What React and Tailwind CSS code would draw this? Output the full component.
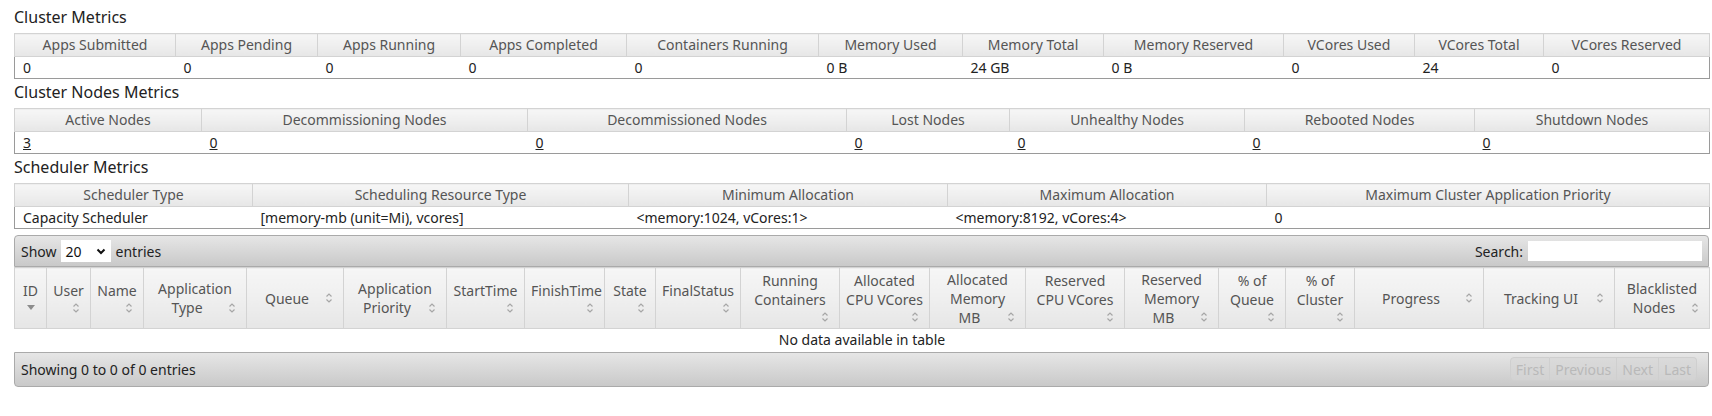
import React from 'react';

const clusterCols = [
  { label: 'Apps Submitted', value: '0', w: 'w-[161px]' },
  { label: 'Apps Pending', value: '0', w: 'w-[142px]' },
  { label: 'Apps Running', value: '0', w: 'w-[143px]' },
  { label: 'Apps Completed', value: '0', w: 'w-[166px]' },
  { label: 'Containers Running', value: '0', w: 'w-[192px]' },
  { label: 'Memory Used', value: '0 B', w: 'w-[144px]' },
  { label: 'Memory Total', value: '24 GB', w: 'w-[141px]' },
  { label: 'Memory Reserved', value: '0 B', w: 'w-[180px]' },
  { label: 'VCores Used', value: '0', w: 'w-[131px]' },
  { label: 'VCores Total', value: '24', w: 'w-[129px]' },
  { label: 'VCores Reserved', value: '0', w: 'w-[166px]' },
];

const nodeCols = [
  { label: 'Active Nodes', value: '3', w: 'w-[187px]' },
  { label: 'Decommissioning Nodes', value: '0', w: 'w-[326px]' },
  { label: 'Decommissioned Nodes', value: '0', w: 'w-[319px]' },
  { label: 'Lost Nodes', value: '0', w: 'w-[163px]' },
  { label: 'Unhealthy Nodes', value: '0', w: 'w-[235px]' },
  { label: 'Rebooted Nodes', value: '0', w: 'w-[230px]' },
  { label: 'Shutdown Nodes', value: '0', w: 'w-[235px]' },
];

const schedulerCols = [
  { label: 'Scheduler Type', value: 'Capacity Scheduler', w: 'w-[238px]' },
  { label: 'Scheduling Resource Type', value: '[memory-mb (unit=Mi), vcores]', w: 'w-[376px]' },
  { label: 'Minimum Allocation', value: '<memory:1024, vCores:1>', w: 'w-[319px]' },
  { label: 'Maximum Allocation', value: '<memory:8192, vCores:4>', w: 'w-[319px]' },
  { label: 'Maximum Cluster Application Priority', value: '0', w: 'w-[443px]' },
];

// icon: 'inline' sits beside the last line, 'below' drops to its own line
const appCols = [
  { lines: ['ID'], icon: 'below', sorted: true, w: 'w-[32px]' },
  { lines: ['User'], icon: 'below', w: 'w-[44px]' },
  { lines: ['Name'], icon: 'below', w: 'w-[53px]' },
  { lines: ['Application', 'Type'], icon: 'inline', w: 'w-[103px]' },
  { lines: ['Queue'], icon: 'inline', w: 'w-[97px]' },
  { lines: ['Application', 'Priority'], icon: 'inline', w: 'w-[103px]' },
  { lines: ['StartTime'], icon: 'below', w: 'w-[78px]' },
  { lines: ['FinishTime'], icon: 'below', w: 'w-[80px]' },
  { lines: ['State'], icon: 'below', w: 'w-[51px]' },
  { lines: ['FinalStatus'], icon: 'below', w: 'w-[85px]' },
  { lines: ['Running', 'Containers'], icon: 'below', w: 'w-[99px]' },
  { lines: ['Allocated', 'CPU VCores'], icon: 'below', w: 'w-[90px]' },
  { lines: ['Allocated', 'Memory', 'MB'], icon: 'inline', w: 'w-[96px]' },
  { lines: ['Reserved', 'CPU VCores'], icon: 'below', w: 'w-[99px]' },
  { lines: ['Reserved', 'Memory', 'MB'], icon: 'inline', w: 'w-[94px]' },
  { lines: ['% of', 'Queue'], icon: 'below', w: 'w-[67px]' },
  { lines: ['% of', 'Cluster'], icon: 'below', w: 'w-[69px]' },
  { lines: ['Progress'], icon: 'inline', w: 'w-[129px]' },
  { lines: ['Tracking UI'], icon: 'inline', w: 'w-[131px]' },
  { lines: ['Blacklisted', 'Nodes'], icon: 'inline', w: 'w-[95px]' },
];

const glass = 'bg-linear-to-b from-[#f6f6f6] via-[#efefef] to-[#e6e6e6]';
const toolbar = 'bg-linear-to-b from-[#e6e6e6] to-[#c9c9c9] border border-[#aaaaaa]';

const SortIcon = ({ sorted }) => (
  <span className="flex w-[16px] h-[16px] items-center justify-center shrink-0">
    {sorted ? (
      <svg width="8" height="5" viewBox="0 0 8 5">
        <path d="M0 0 H8 L4 5 Z" fill="#8c8c8c" />
      </svg>
    ) : (
      <svg width="8" height="12" viewBox="0 0 8 12" fill="none">
        <path d="M1.5 4.5 L4 2 L6.5 4.5" stroke="#a6a6a6" strokeWidth="1.2" />
        <path d="M1.5 7.5 L4 10 L6.5 7.5" stroke="#a6a6a6" strokeWidth="1.2" />
      </svg>
    )}
  </span>
);

const Heading = ({ children }) => (
  <h3 className="text-[16px] leading-[22px] pt-[2px] pb-[5px] text-[#222] font-normal">{children}</h3>
);

const MetricTable = ({ cols, link }) => (
  <table className="w-full table-fixed border-collapse">
    <thead>
      <tr>
        {cols.map((c) => (
          <th
            key={c.label}
            className={`${c.w} ${glass} h-[23px] p-0 border border-[#d3d3d3] font-normal text-[#555] text-[14px] leading-[18px] text-center whitespace-nowrap`}
          >
            {c.label}
          </th>
        ))}
      </tr>
    </thead>
    <tbody>
      <tr>
        {cols.map((c) => (
          <td
            key={c.label}
            className="h-[22px] p-0 pl-[8px] text-[14px] leading-[18px] text-[#222] border-b border-[#9a9a9a] first:border-l last:border-r whitespace-nowrap"
          >
            {link ? <span className="underline">{c.value}</span> : c.value}
          </td>
        ))}
      </tr>
    </tbody>
  </table>
);

const AppHeader = ({ col }) => {
  const last = col.lines.length - 1;
  return (
    <th className={`${col.w} ${glass} p-0 px-[6px] border border-[#d3d3d3] font-normal text-[#555] text-[14px] leading-[19px] align-middle`}>
      <div className="flex flex-col">
        {col.lines.map((line, i) =>
          i === last && col.icon === 'inline' ? (
            <div key={line} className="flex items-center">
              <span className="flex-1 text-center whitespace-nowrap">{line}</span>
              <SortIcon />
            </div>
          ) : (
            <div key={line} className="text-center whitespace-nowrap">{line}</div>
          )
        )}
        {col.icon === 'below' && (
          <div className={`flex ${col.sorted ? 'justify-center' : 'justify-end'}`}>
            <SortIcon sorted={col.sorted} />
          </div>
        )}
      </div>
    </th>
  );
};

const PageButton = ({ children, first, last }) => (
  <span
    className={`px-[5px] h-[24px] flex items-center text-[#b9b9b9] bg-[#d6d6d6]/60 border-[#cfcfcf] ${first ? 'border rounded-l-[4px]' : 'border-y border-r'} ${last ? 'rounded-r-[4px]' : ''}`}
  >
    {children}
  </span>
);

export default function App() {
  return (
    <div className="w-[1712px] h-[416px] bg-white pl-[14px] pr-[3px] pt-[4px] font-['Noto_Sans',sans-serif] text-[#222] text-[14px] overflow-hidden">
      <Heading>Cluster Metrics</Heading>
      <MetricTable cols={clusterCols} />

      <Heading>Cluster Nodes Metrics</Heading>
      <MetricTable cols={nodeCols} link />

      <Heading>Scheduler Metrics</Heading>
      <MetricTable cols={schedulerCols} />

      <div className="mt-[6px]">
        {/* top toolbar */}
        <div className={`${toolbar} rounded-t-[4px] h-[32px] flex items-center justify-between px-[6px]`}>
          <div className="flex items-center gap-[4px]">
            <span>Show</span>
            <span className="bg-white h-[22px] w-[50px] flex items-center justify-between px-[5px] text-[#111]">
              20
              <svg width="10" height="7" viewBox="0 0 10 7" fill="none">
                <path d="M1.5 1.5 L5 5 L8.5 1.5" stroke="#111" strokeWidth="2" />
              </svg>
            </span>
            <span className="ml-[1px]">entries</span>
          </div>
          <div className="flex items-center gap-[5px]">
            <span>Search:</span>
            <span className="bg-white h-[20px] w-[174px] block" />
          </div>
        </div>

        <table className="w-full table-fixed border-collapse">
          <thead>
            <tr className="h-[61px]">
              {appCols.map((c) => (
                <AppHeader key={c.lines.join(' ')} col={c} />
              ))}
            </tr>
          </thead>
          <tbody>
            <tr>
              <td colSpan={appCols.length} className="h-[21px] p-0 text-center text-[14px] leading-[19px] text-[#222]">
                No data available in table
              </td>
            </tr>
          </tbody>
        </table>

        {/* bottom toolbar */}
        <div className={`${toolbar} rounded-b-[4px] h-[35px] mt-[2px] flex items-center justify-between pl-[6px] pr-[11px]`}>
          <span>Showing 0 to 0 of 0 entries</span>
          <div className="flex items-center">
            <PageButton first>First</PageButton>
            <PageButton>Previous</PageButton>
            <PageButton>Next</PageButton>
            <PageButton last>Last</PageButton>
          </div>
        </div>
      </div>
    </div>
  );
}
